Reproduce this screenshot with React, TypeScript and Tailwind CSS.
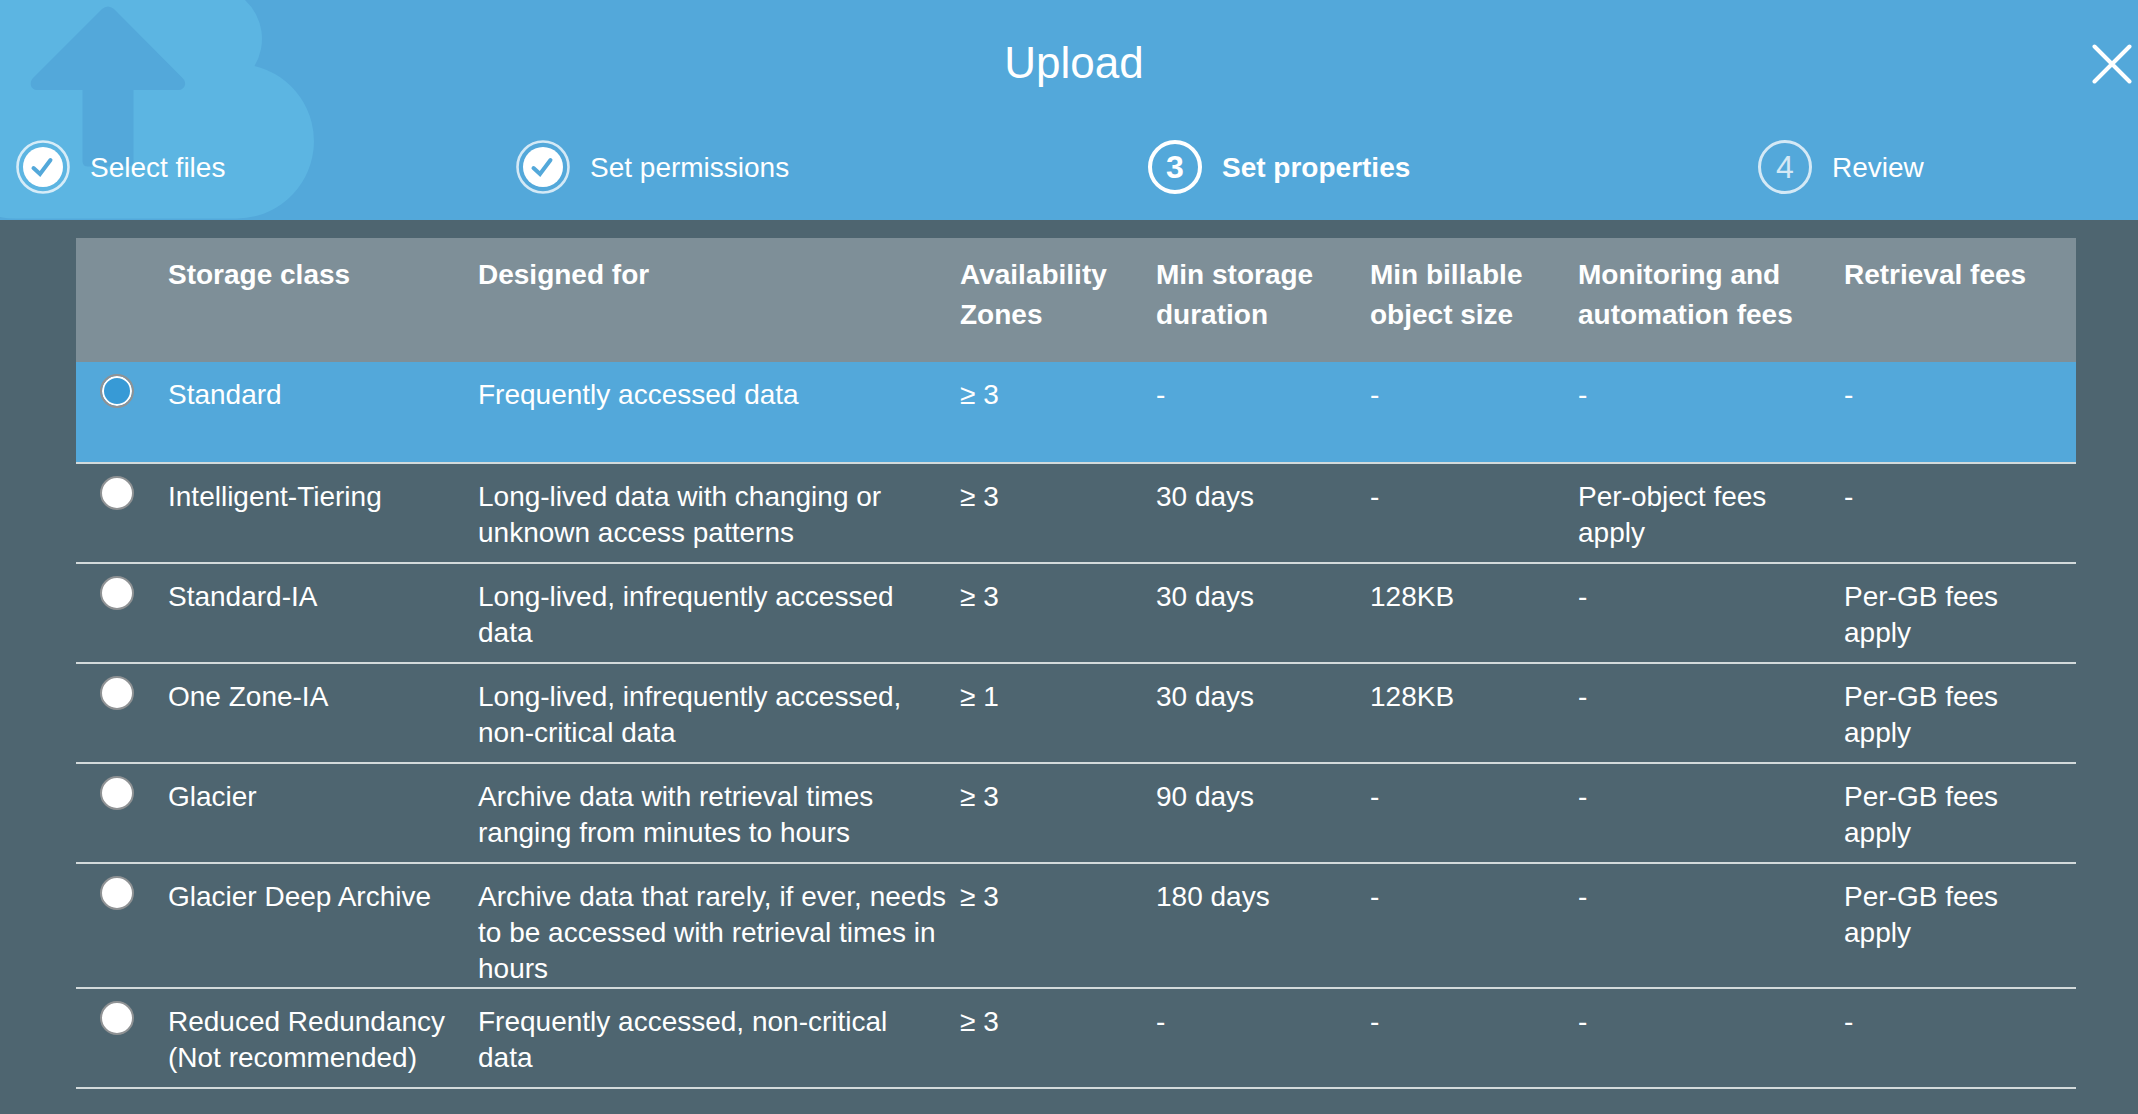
import { useState } from "react";

type Row = {
  name: string[];
  designedFor: string;
  zones: string;
  duration: string;
  billable: string;
  monitoring: string;
  retrieval: string;
};

const columns = [
  "Storage class",
  "Designed for",
  "Availability Zones",
  "Min storage duration",
  "Min billable object size",
  "Monitoring and automation fees",
  "Retrieval fees",
];

const rows: Row[] = [
  { name: ["Standard"], designedFor: "Frequently accessed data", zones: "≥ 3", duration: "-", billable: "-", monitoring: "-", retrieval: "-" },
  { name: ["Intelligent-Tiering"], designedFor: "Long-lived data with changing or unknown access patterns", zones: "≥ 3", duration: "30 days", billable: "-", monitoring: "Per-object fees apply", retrieval: "-" },
  { name: ["Standard-IA"], designedFor: "Long-lived, infrequently accessed data", zones: "≥ 3", duration: "30 days", billable: "128KB", monitoring: "-", retrieval: "Per-GB fees apply" },
  { name: ["One Zone-IA"], designedFor: "Long-lived, infrequently accessed, non-critical data", zones: "≥ 1", duration: "30 days", billable: "128KB", monitoring: "-", retrieval: "Per-GB fees apply" },
  { name: ["Glacier"], designedFor: "Archive data with retrieval times ranging from minutes to hours", zones: "≥ 3", duration: "90 days", billable: "-", monitoring: "-", retrieval: "Per-GB fees apply" },
  { name: ["Glacier Deep Archive"], designedFor: "Archive data that rarely, if ever, needs to be accessed with retrieval times in hours", zones: "≥ 3", duration: "180 days", billable: "-", monitoring: "-", retrieval: "Per-GB fees apply" },
  { name: ["Reduced Redundancy", "(Not recommended)"], designedFor: "Frequently accessed, non-critical data", zones: "≥ 3", duration: "-", billable: "-", monitoring: "-", retrieval: "-" },
];

function CloudArt() {
  return (
    <svg className="absolute top-0 left-0 h-[220px] w-[320px]" viewBox="0 0 320 220" aria-hidden="true">
      <path
        fill="#5cb5e2"
        d="M0 0H245A53 53 0 0 1 254.500 66A77.300 77.300 0 0 1 236 218.500H15Q7 218.500 0 217Z"
      />
      <path
        fill="#53a8da"
        d="M102 9Q108 4 114 9L182.500 78C188 83 184 90 179 90H133.500V161Q133.500 166.500 128 166.500H88Q82.500 166.500 82.500 161V90H37C31 90 28.500 83 33 78Z"
      />
    </svg>
  );
}

function DoneMark() {
  return (
    <svg className="size-[54px] shrink-0" viewBox="0 0 54 54" fill="none" aria-hidden="true">
      <circle cx="27" cy="27" r="25.500" stroke="#fff" strokeOpacity="0.75" strokeWidth="2.600" />
      <circle cx="27" cy="27" r="20" fill="#fff" />
      <path d="M17.500 28L24 34L34.500 20" stroke="#53a8da" strokeWidth="4" strokeLinecap="round" />
    </svg>
  );
}

function Step({ n, label, state }: { n: number; label: string; state: "done" | "current" | "next" }) {
  return (
    <li className="flex items-center gap-5 pl-4" aria-current={state === "current" ? "step" : undefined}>
      {state === "done" && <DoneMark />}
      {state === "current" && (
        <span className="flex size-[54px] shrink-0 items-center justify-center rounded-full border-4 border-white text-[32px] leading-9 font-bold">
          {n}
        </span>
      )}
      {state === "next" && (
        <span className="flex size-[54px] shrink-0 items-center justify-center rounded-full border-3 border-white/75 text-[32px] leading-9 text-white/75">
          {n}
        </span>
      )}
      <span className={state === "current" ? "pt-0.5 font-bold" : "pt-0.5 font-normal"}>{label}</span>
    </li>
  );
}

export default function App() {
  const [selected, setSelected] = useState(0);
  const cell = "h-[100px] border-b-2 border-[#d3dadb] pt-[15px] pl-3";

  return (
    <div className="min-h-screen bg-[#4e6570] font-['Liberation_Sans',Arial,sans-serif] text-[28px] leading-9 text-white">
      <header className="relative bg-[#53a8da] pb-[26px]">
        <CloudArt />
        <div className="relative flex h-[140px] items-start justify-center pt-[39px]">
          <h1 className="pl-2.5 text-[44px] leading-12 font-normal">Upload</h1>
          <button type="button" aria-label="Close" className="absolute top-11 right-1.5 size-10">
            <svg className="size-10" viewBox="0 0 40 40" fill="none" stroke="#fff" strokeWidth="4" strokeLinecap="round">
              <path d="M2.500 2.500L37.500 37.500M37.500 2.500L2.500 37.500" />
            </svg>
          </button>
        </div>
        <ol className="relative grid grid-cols-[500fr_632fr_610fr_396fr]">
          <Step n={1} label="Select files" state="done" />
          <Step n={2} label="Set permissions" state="done" />
          <Step n={3} label="Set properties" state="current" />
          <Step n={4} label="Review" state="next" />
        </ol>
      </header>

      <main className="pt-[18px] pr-[62px] pl-[76px]">
        <table className="w-full table-fixed border-separate border-spacing-0 text-left">
          <colgroup>
            <col className="w-[4%]" />
            <col className="w-[15.500%]" />
            <col className="w-[24.100%]" />
            <col className="w-[9.800%]" />
            <col className="w-[10.700%]" />
            <col className="w-[10.400%]" />
            <col className="w-[13.300%]" />
            <col />
          </colgroup>
          <thead>
            <tr className="bg-[#7e8f98] align-top leading-10">
              <td className="h-[124px]" />
              {columns.map((c) => (
                <th key={c} scope="col" className="pt-[17px] pl-3 font-bold">
                  {c}
                </th>
              ))}
            </tr>
          </thead>
          <tbody>
            {rows.map((r, i) => (
              <tr key={r.name[0]} className={i === selected ? "h-[102px] bg-[#53a8da] align-top" : "align-top"}>
                <td className="h-[100px] border-b-2 border-[#d3dadb] pt-3 pl-6">
                  <input
                    id={`class-${i}`}
                    type="radio"
                    name="storage-class"
                    checked={i === selected}
                    onChange={() => setSelected(i)}
                    className="block size-[34px] appearance-none rounded-full border-2 border-[#8f9294] bg-white checked:bg-[#379ad6] checked:shadow-[inset_0_0_0_2px_#fff]"
                  />
                </td>
                <td className={cell}>
                  <label htmlFor={`class-${i}`}>
                    {r.name.map((line) => (
                      <span key={line} className="block whitespace-nowrap">
                        {line}
                      </span>
                    ))}
                  </label>
                </td>
                <td className={cell}>{r.designedFor}</td>
                <td className={cell}>{r.zones}</td>
                <td className={cell}>{r.duration}</td>
                <td className={cell}>{r.billable}</td>
                <td className={`${cell} pr-12`}>{r.monitoring}</td>
                <td className={`${cell} pr-16`}>{r.retrieval}</td>
              </tr>
            ))}
          </tbody>
        </table>
      </main>
    </div>
  );
}
